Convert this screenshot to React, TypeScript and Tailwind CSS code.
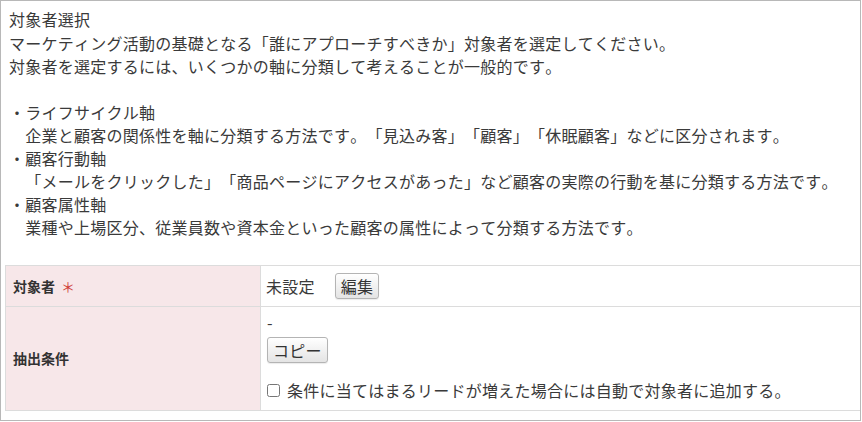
const font = "font-['Noto_Sans_CJK_JP','Noto_Sans',sans-serif]";

function Btn({ label }: { label: string }) {
  return (
    <button className="h-[26px] px-[5px] text-[16px] leading-[20px] text-[#333] border border-[#b4b4b4] rounded-[3px] bg-gradient-to-b from-[#ffffff] to-[#e4e4e4] shadow-[0_1px_1px_rgba(0,0,0,0.08)]">
      {label}
    </button>
  );
}

export default function App() {
  return (
    <div
      className={`w-[861px] h-[421px] border border-[#b8b8b8] bg-white text-[#3a3a3a] [text-spacing-trim:space-all] [font-kerning:none] ${font}`}
    >
      <div className="pt-[6px] pl-[8px] text-[16px] leading-[23px] tracking-[0.25px]">
        <div className="leading-[25px]">対象者選択</div>
        <div>マーケティング活動の基礎となる「誰にアプローチすべきか」対象者を選定してください。</div>
        <div>対象者を選定するには、いくつかの軸に分類して考えることが一般的です。</div>
        <div className="h-[23px]" />
        <div>・ライフサイクル軸</div>
        <div>　企業と顧客の関係性を軸に分類する方法です。「見込み客」「顧客」「休眠顧客」などに区分されます。</div>
        <div>・顧客行動軸</div>
        <div>　「メールをクリックした」「商品ページにアクセスがあった」など顧客の実際の行動を基に分類する方法です。</div>
        <div>・顧客属性軸</div>
        <div>　業種や上場区分、従業員数や資本金といった顧客の属性によって分類する方法です。</div>
      </div>

      <div className="ml-[4px] mt-[26px] border-t border-l border-[#dcdcdc]">
        <div className="flex h-[41px] border-b border-[#dcdcdc]">
          <div className="w-[255px] shrink-0 flex items-center pl-[7px] bg-[#f7e7e9] border-r border-[#dcdcdc] text-[14px] font-bold text-[#333]">
            対象者<span className="ml-[6px] text-[#d0413a] font-normal">＊</span>
          </div>
          <div className="flex items-center pl-[5px] text-[16px] tracking-[0.25px]">
            <span>未設定</span>
            <span className="ml-[20px]">
              <Btn label="編集" />
            </span>
          </div>
        </div>
        <div className="flex h-[104px] border-b border-[#dcdcdc]">
          <div className="w-[255px] shrink-0 flex items-center pl-[7px] bg-[#f7e7e9] border-r border-[#dcdcdc] text-[14px] font-bold text-[#333]">
            抽出条件
          </div>
          <div className="flex flex-col pl-[6px] pt-[4px] text-[16px] leading-[23px] tracking-[0.25px]">
            <div>-</div>
            <div className="mt-[3px]">
              <Btn label="コピー" />
            </div>
            <label className="mt-[16px] flex items-center">
              <input type="checkbox" className="m-0 mr-[7px] w-[13px] h-[13px]" />
              <span>条件に当てはまるリードが増えた場合には自動で対象者に追加する。</span>
            </label>
          </div>
        </div>
      </div>
    </div>
  );
}
